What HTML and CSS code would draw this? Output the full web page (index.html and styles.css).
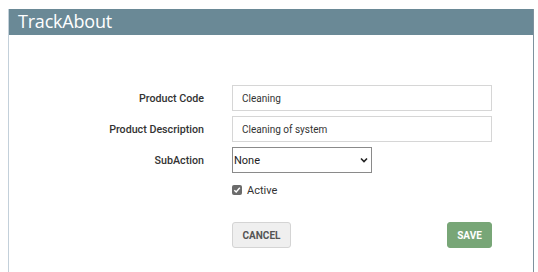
FILE: index.html
```html
<!DOCTYPE html>
<html lang="en">
<head>
    <meta charset="UTF-8">
    <title>TrackAbout - Product</title>
    <link rel="stylesheet" href="styles.css">
</head>
<body>
    <div class="panel">
        <div class="panel-header">TrackAbout</div>
        <form class="product-form">
            <label class="field-label" for="code">Product Code</label>
            <input class="text-input" id="code" type="text" value="Cleaning">

            <label class="field-label" for="desc">Product Description</label>
            <input class="text-input" id="desc" type="text" value="Cleaning of system">

            <label class="field-label" for="sub">SubAction</label>
            <div class="select-wrap">
                <select class="select-input" id="sub">
                    <option>None</option>
                </select>
                <svg class="chevron" width="8" height="6" viewBox="0 0 8 6"><path d="M1 1.5 L4 4.5 L7 1.5" fill="none" stroke="#222" stroke-width="1.6"/></svg>
            </div>

            <span></span>
            <label class="check-row">
                <span class="check-box">
                    <svg width="8" height="8" viewBox="0 0 8 8"><path d="M1.3 4.2 L3.2 6 L6.8 1.8" fill="none" stroke="#fff" stroke-width="1.4"/></svg>
                </span>
                Active
            </label>

            <span></span>
            <div class="actions">
                <button type="button" class="btn btn-cancel">CANCEL</button>
                <button type="button" class="btn btn-save">SAVE</button>
            </div>
        </form>
    </div>
</body>
</html>
```

FILE: styles.css
```css
body {
    margin: 0;
    background-color: #fff;
    font-family: Roboto, "Liberation Sans", sans-serif;
    color: #333;
}

.panel {
    margin: 9px 0 0 8px;
    width: 524px;
    height: 263px;
    border-left: 1px solid #c3d0da;
    border-right: 1px solid #7e929e;
}

.panel-header {
    height: 26px;
    line-height: 25px;
    background-color: #6a8996;
    color: #fff;
    font-family: "Open Sans", "Liberation Sans", sans-serif;
    font-size: 18px;
    padding-left: 9px;
    letter-spacing: -0.2px;
}

.product-form {
    display: grid;
    grid-template-columns: 195px 260px;
    column-gap: 28px;
    row-gap: 5px;
    padding-top: 50px;
    align-items: center;
}

.field-label {
    text-align: right;
    font-size: 10.7px;
    font-weight: 500;
    color: #333;
}

.text-input {
    box-sizing: border-box;
    height: 26px;
    width: 260px;
    border: 1px solid #d6d6d6;
    padding: 0 9px;
    font-family: Roboto, "Liberation Sans", sans-serif;
    font-size: 10px;
    color: #333;
    outline: none;
}

.select-wrap {
    position: relative;
    width: 140px;
}

.select-input {
    box-sizing: border-box;
    height: 26px;
    width: 140px;
    border: 1px solid #8a8a8a;
    border-radius: 0;
    background: #fff;
    padding: 0 0 0 1px;
    font-family: Roboto, "Liberation Sans", sans-serif;
    font-size: 11px;
    color: #222;
    appearance: none;
}

.chevron {
    position: absolute;
    right: 4px;
    top: 10px;
}

.check-row {
    display: flex;
    align-items: center;
    gap: 5px;
    font-size: 11px;
    color: #333;
    height: 24px;
}

.check-box {
    width: 10px;
    height: 10px;
    border-radius: 2px;
    background-color: #6b6b6b;
    display: flex;
    align-items: center;
    justify-content: center;
}

.actions {
    display: flex;
    justify-content: space-between;
    margin-top: 15px;
}

.btn {
    height: 26px;
    border-radius: 3px;
    font-family: Roboto, "Liberation Sans", sans-serif;
    font-size: 10px;
    font-weight: bold;
    cursor: pointer;
}

.btn-cancel {
    width: 59px;
    background-color: #efefef;
    border: 1px solid #d4d4d4;
    color: #555;
}

.btn-save {
    width: 45px;
    background-color: #78a677;
    border: 1px solid #78a677;
    color: #fff;
}
```
